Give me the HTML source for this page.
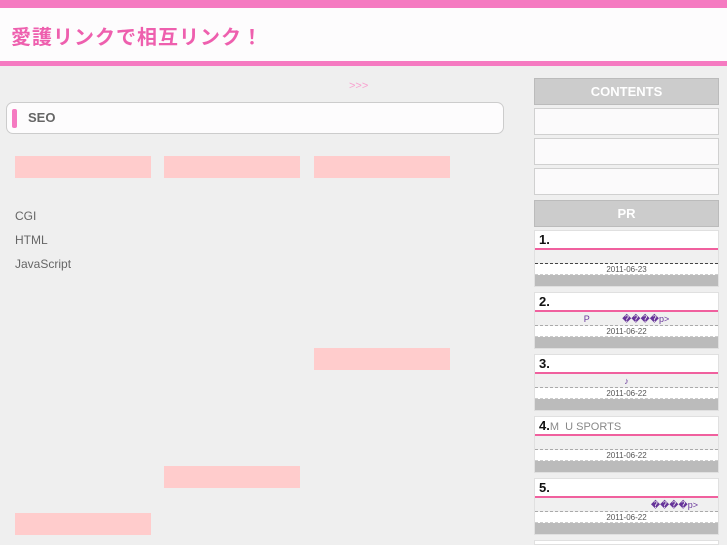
<!DOCTYPE html>
<html><head><meta charset="utf-8"><style>
*{margin:0;padding:0;box-sizing:border-box}
html,body{width:727px;height:545px;overflow:hidden}
body{background:#efefef;font-family:"Liberation Sans","Noto Sans CJK JP",sans-serif;position:relative}
.a{position:absolute}
.pk{background:#ffcccc;height:22px;width:136px;position:absolute}
.lnk{position:absolute;left:15px;font-size:12px;color:#666}
.side{position:absolute;left:534px;width:185px}
.hd{background:#cccccc;border:1px solid #bbb;height:27px;color:#fff;font-weight:bold;font-size:13px;text-align:center;line-height:25px}
.wb{background:#fbfafb;border:1px solid #d0d0d0;height:27px}
.ent{position:absolute;left:534px;width:185px;height:57px;border:1px solid #e0e0e0;background:#f7f7f7;overflow:hidden}
.ent .t{height:19px;background:#fff;border-bottom:2px solid #f0609e;font-weight:bold;font-size:13px;line-height:18px;padding-left:4px;color:#111}
.ent .b{height:14px;background:#f0f0f0;font-size:9px;color:#639;text-align:center;line-height:14px;border-bottom:1px dashed #aaa}
.ent .d{height:11px;background:#fff;font-size:8px;color:#555;text-align:center;line-height:11px;border-bottom:1px dashed #ccc}
.ent .g{height:11px;background:#bbb}
</style></head><body>
<div class="a" style="left:0;top:0;width:727px;height:8px;background:#f57ac1"></div>
<div class="a" style="left:0;top:8px;width:727px;height:53px;background:#fdfcfd"></div>
<div class="a" style="left:0;top:61px;width:727px;height:5px;background:#f57ac1"></div>
<div class="a" style="left:11px;top:21px;font-size:20px;font-weight:bold;color:#ee5fae;letter-spacing:1px">愛護リンクで相互リンク！</div>
<div class="a" style="left:349px;top:80px;font-size:11px;color:#f9a0cf">&gt;&gt;&gt;</div>
<div class="a" style="left:6px;top:102px;width:498px;height:32px;background:#fdfcfd;border:1px solid #ccc;border-radius:7px"></div>
<div class="a" style="left:12px;top:109px;width:5px;height:19px;background:#f57ac1;border-radius:2px"></div>
<div class="a" style="left:28px;top:110px;font-size:13px;font-weight:bold;color:#666">SEO</div>
<div class="pk" style="left:15px;top:156px"></div>
<div class="pk" style="left:164px;top:156px"></div>
<div class="pk" style="left:314px;top:156px"></div>
<div class="pk" style="left:314px;top:348px"></div>
<div class="pk" style="left:164px;top:466px"></div>
<div class="pk" style="left:15px;top:513px"></div>
<div class="lnk" style="top:209px">CGI</div>
<div class="lnk" style="top:233px">HTML</div>
<div class="lnk" style="top:257px">JavaScript</div>
<div class="side" style="top:78px">
<div class="hd">CONTENTS</div>
<div class="wb" style="margin-top:3px"></div>
<div class="wb" style="margin-top:3px"></div>
<div class="wb" style="margin-top:3px"></div>
<div class="hd" style="margin-top:5px">PR</div>
</div>
<div class="ent" style="top:230px"><div class="t">1.</div><div class="b" style="border-bottom:1px dashed #444"></div><div class="d">2011-06-23</div><div class="g"></div></div>
<div class="ent" style="top:292px"><div class="t">2.</div><div class="b">P &nbsp;&nbsp;&nbsp;&nbsp;&nbsp;&nbsp;&nbsp;&nbsp;&nbsp;&nbsp;&nbsp;&nbsp;����p&gt;</div><div class="d">2011-06-22</div><div class="g"></div></div>
<div class="ent" style="top:354px"><div class="t">3.</div><div class="b">♪</div><div class="d">2011-06-22</div><div class="g"></div></div>
<div class="ent" style="top:416px"><div class="t">4.<span style="color:#888;font-weight:normal;font-size:11px">M &nbsp;U SPORTS</span></div><div class="b"></div><div class="d">2011-06-22</div><div class="g"></div></div>
<div class="ent" style="top:478px"><div class="t">5.</div><div class="b" style="text-align:right;padding-right:20px">����p&gt;</div><div class="d">2011-06-22</div><div class="g"></div></div>
<div class="ent" style="top:540px;height:5px"><div class="t">6.</div></div>
</body></html>
